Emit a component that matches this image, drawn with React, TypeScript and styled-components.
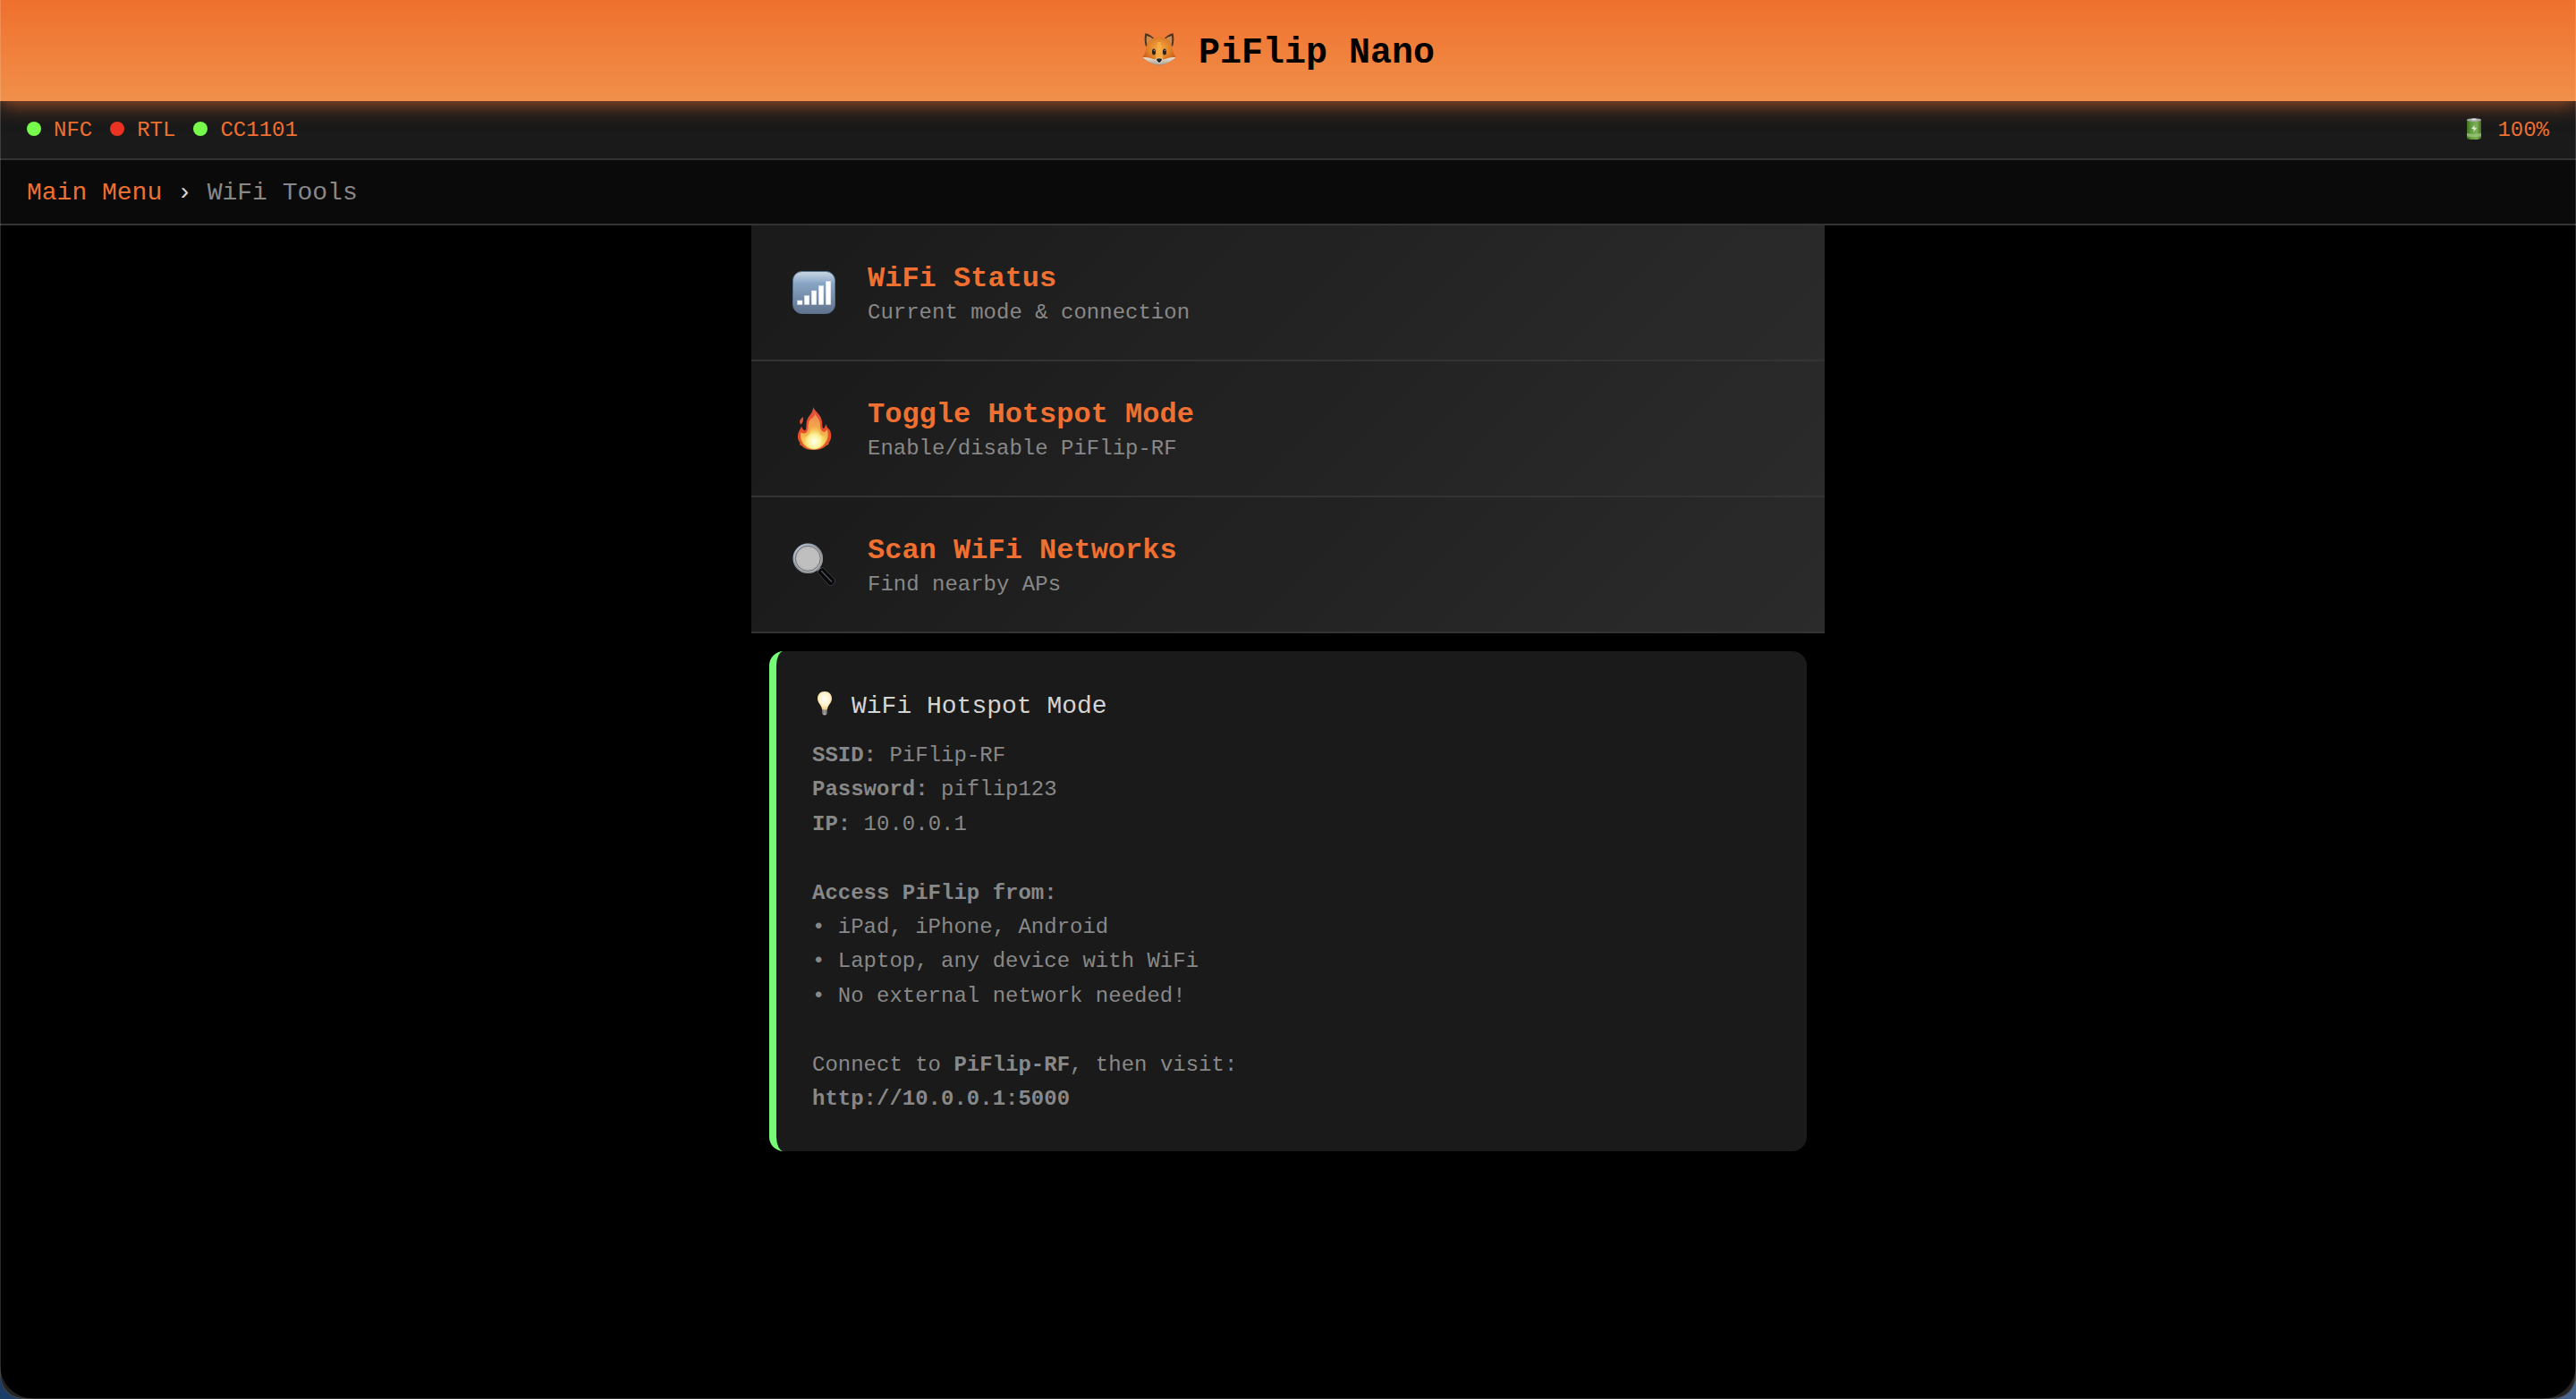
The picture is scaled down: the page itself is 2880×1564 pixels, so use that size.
import React from "react";
import styled, { createGlobalStyle } from "styled-components";

const orange = "#ef7030";
const line = "#333333";
const muted = "#888888";

const GlobalStyle = createGlobalStyle`
  * { box-sizing: border-box; }
  html { background: linear-gradient(90deg, #1b3d68, #47658f); }
  body {
    margin: 0;
    font-family: "Courier New", "Liberation Mono", monospace;
    font-size: 24px;
    line-height: 28px;
    color: #d4d4d4;
  }
`;

const Shell = styled.div`
  min-height: 100vh;
  background: #232323;
  border-radius: 0 0 26px 26px;
  overflow: hidden;

  &::after {
    content: "";
    position: fixed;
    inset: 0;
    border: 1px solid rgba(255, 255, 255, 0.16);
    border-top: 0;
    border-radius: 0 0 26px 26px;
    pointer-events: none;
    z-index: 2;
  }
`;

const Screen = styled.div`
  min-height: 100vh;
  background: #000;
  border-radius: 0 0 38px 38px;
  overflow: hidden;
`;

const Header = styled.header`
  position: relative;
  z-index: 1;
  display: flex;
  justify-content: center;
  align-items: center;
  gap: 24px;
  padding: 37px 30px 30px;
  background: linear-gradient(180deg, #ef702d, #f0904a);
  box-shadow: 0 4px 20px rgba(239, 112, 48, 0.62);
`;

const AppTitle = styled.h1`
  margin: 0;
  font-size: 40px;
  line-height: 46px;
  font-weight: bold;
  color: #000;
`;

const StatusBar = styled.div`
  display: flex;
  justify-content: space-between;
  align-items: center;
  padding: 19px 30px 17px;
  background: #1a1a1a;
  border-bottom: 2px solid ${line};
  color: ${orange};
`;

const StatusGroup = styled.div`
  display: flex;
  gap: 20px;
`;

const StatusItem = styled.span`
  display: flex;
  align-items: center;
  gap: 14px;

  & > svg {
    margin-bottom: 4px;
  }
`;

const Dot = styled.span<{ $on: boolean }>`
  width: 16px;
  height: 16px;
  margin-bottom: 4px;
  border-radius: 50%;
  background: ${(p) => (p.$on ? "#76fb4c" : "#ea3323")};
`;

const Breadcrumb = styled.nav`
  padding: 21px 30px 18px;
  background: #0a0a0a;
  border-bottom: 2px solid ${line};
  font-size: 28px;
  line-height: 32px;
`;

const CrumbLink = styled.a`
  color: ${orange};
  text-decoration: none;
`;

const CrumbCurrent = styled.span`
  color: ${muted};
`;

const Content = styled.main`
  width: 100%;
  max-width: 1200px;
  margin: 0 auto;
`;

const MenuItem = styled.button`
  display: flex;
  align-items: center;
  gap: 30px;
  width: 100%;
  padding: 37px 40px 38px;
  border: 0;
  border-bottom: 2px solid ${line};
  background: linear-gradient(135deg, #1a1a1a, #2b2b2b);
  font: inherit;
  text-align: left;
  cursor: pointer;
`;

const MenuIcon = styled.span`
  display: flex;
  justify-content: center;
  width: 60px;
`;

const MenuText = styled.span`
  display: flex;
  flex-direction: column;
  gap: 6px;
  padding-top: 5px;
`;

const MenuTitle = styled.span`
  font-size: 32px;
  line-height: 36px;
  font-weight: bold;
  color: ${orange};
`;

const MenuNote = styled.span`
  color: ${muted};
`;

const Card = styled.section`
  margin: 20px;
  padding: 42px 40px 39px;
  background: #1a1a1a;
  border-left: 8px solid #75fb77;
  border-radius: 16px;
`;

const CardTitle = styled.h2`
  display: flex;
  align-items: center;
  gap: 16px;
  margin: 0 0 16px;
  font-size: 28px;
  line-height: 40px;
  font-weight: normal;

  & > svg {
    margin-bottom: 6px;
  }
`;

const CardText = styled.p`
  margin: 0;
  line-height: 1.6;
  color: ${muted};
`;

const Fox = () => (
  <svg width="40" height="46" viewBox="0 2 40 46" aria-hidden="true">
    <defs>
      <radialGradient id="foxFace" cx="0.5" cy="0.4" r="0.6">
        <stop offset="0" stopColor="#f6ac45" />
        <stop offset="0.6" stopColor="#e07f28" />
        <stop offset="1" stopColor="#bd5618" />
      </radialGradient>
      <linearGradient id="foxMuzzle" x1="0" y1="0" x2="0" y2="1">
        <stop offset="0" stopColor="#efe4d2" />
        <stop offset="1" stopColor="#a99f90" />
      </linearGradient>
    </defs>
    <path d="M4.5 2 C3.2 7 3.4 12 5 17 L15 9 C12 5.5 8.5 3 4.5 2Z" fill="#4d3322" />
    <path d="M35.5 2 C36.8 7 36.6 12 35 17 L25 9 C28 5.5 31.5 3 35.5 2Z" fill="#4d3322" />
    <path d="M6 5 C5.3 9 5.6 13 7 17 L14 9.5 C11.5 7 9 5.8 6 5Z" fill="#cf8a4e" />
    <path d="M34 5 C34.7 9 34.4 13 33 17 L26 9.5 C28.5 7 31 5.8 34 5Z" fill="#cf8a4e" />
    <path d="M20 6.5 C12 6.5 6.5 12 5.5 19 C5 23 3.5 26 1.5 29 C6 33.5 13 37.5 20 37.7 C27 37.5 34 33.5 38.5 29 C36.5 26 35 23 34.5 19 C33.5 12 28 6.5 20 6.5Z" fill="url(#foxFace)" />
    <path d="M1.5 29 C6 28.5 11 30 15.5 31.5 C17 29.5 18.5 28.8 20 28.8 C21.5 28.8 23 29.5 24.5 31.5 C29 30 34 28.5 38.5 29 C34 33.5 27 37.5 20 37.7 C13 37.5 6 33.5 1.5 29Z" fill="url(#foxMuzzle)" />
    <path d="M18 12 C17.8 20 17 25 15.5 29.5 C17 32 23 32 24.5 29.5 C23 25 22.2 20 22 12Z" fill="#f7b14a" opacity="0.75" />
    <path d="M17 31 C18 30 22 30 23 31 L23 34.5 L20 36 L17 34.5Z" fill="#e5dccd" />
    <ellipse cx="14" cy="23" rx="2" ry="3.5" fill="#28241f" />
    <ellipse cx="26" cy="23" rx="2" ry="3.5" fill="#28241f" />
    <circle cx="14.5" cy="21.5" r="0.7" fill="#9a9a94" />
    <circle cx="26.5" cy="21.5" r="0.7" fill="#9a9a94" />
    <path d="M17 31 Q20 29.5 23 31 Q22.5 34.5 20 35 Q17.5 34.5 17 31Z" fill="#262423" />
  </svg>
);

const Battery = () => (
  <svg width="24" height="24" viewBox="0 0 24 24" aria-hidden="true">
    <defs>
      <linearGradient id="cell" x1="0" y1="0" x2="1" y2="0">
        <stop offset="0" stopColor="#3f6d24" />
        <stop offset="0.25" stopColor="#5f9a3b" />
        <stop offset="0.7" stopColor="#7cb256" />
        <stop offset="1" stopColor="#42701f" />
      </linearGradient>
    </defs>
    <path d="M4 2 V22 Q4 24 12 24 Q20 24 20 22 V2Z" fill="url(#cell)" />
    <ellipse cx="12" cy="2" rx="8" ry="1.8" fill="#a9adb0" />
    <ellipse cx="12" cy="1.4" rx="3" ry="1" fill="#dfe2ee" />
    <path d="M4 17 Q12 18.5 20 17 V20.5 Q12 22 4 20.5Z" fill="#9dc77c" opacity="0.75" />
    <path d="M12.8 7.5 L9 12 L12 12.5 L11 16 L15.2 11 L12.3 10.5Z" fill="#dcebd0" />
  </svg>
);

const Signal = () => (
  <svg width="48" height="48" viewBox="0 0 48 48" aria-hidden="true">
    <defs>
      <linearGradient id="tile" x1="0" y1="0" x2="0" y2="1">
        <stop offset="0" stopColor="#c9d6e3" />
        <stop offset="0.1" stopColor="#b4c7da" />
        <stop offset="0.28" stopColor="#89a5c5" />
        <stop offset="0.65" stopColor="#7389a6" />
        <stop offset="1" stopColor="#61738d" />
      </linearGradient>
    </defs>
    <rect x="0.5" y="0.5" width="47" height="47" rx="10" fill="url(#tile)" stroke="#58718f" />
    <g fill="#fff" stroke="#d5dde8" strokeWidth="0.5">
      <rect x="5.5" y="33" width="5.5" height="4.5" />
      <rect x="13.3" y="27.5" width="5.5" height="10" />
      <rect x="21.3" y="22" width="5.5" height="15.5" />
      <rect x="29.3" y="16.5" width="5.5" height="21" />
      <rect x="37.3" y="11.5" width="5.5" height="26" />
    </g>
  </svg>
);

const Fire = () => (
  <svg width="48" height="48" viewBox="0 0 48 48" aria-hidden="true">
    <defs>
      <linearGradient id="flame" x1="0" y1="0" x2="0" y2="1">
        <stop offset="0" stopColor="#e2533f" />
        <stop offset="0.5" stopColor="#ea4b2c" />
        <stop offset="1" stopColor="#dd5a22" />
      </linearGradient>
      <linearGradient id="flameMid" x1="0" y1="0" x2="0" y2="1">
        <stop offset="0" stopColor="#ee8a4e" />
        <stop offset="0.5" stopColor="#f4ad4c" />
        <stop offset="1" stopColor="#f5c94a" />
      </linearGradient>
      <radialGradient id="flameCore" cx="0.5" cy="0.7" r="0.55">
        <stop offset="0" stopColor="#fffff0" />
        <stop offset="0.45" stopColor="#fdf29a" />
        <stop offset="1" stopColor="#f8d75a" stopOpacity="0" />
      </radialGradient>
    </defs>
    <path d="M23 0 C24 4 32 8 33 16 C33.5 19 33 21 34 24 C36 24.5 36.5 21 37.5 19 C38 22 40 24 42 26 C44 31 43.5 37 40.5 40 C41 41 39.5 43 38 43 C34 47 29 48 24 48 C18 48 13 47 10 43 C8.5 43 7.5 41 8.5 40 C5 36 5 30 9 24 L10 21.5 C11 24 12 26 14 26.5 C16.5 24 14.5 19 16.5 14 C18.5 9 23.5 6 23 0Z" fill="url(#flame)" />
    <path d="M12 11 C11.5 14 13 16 9.5 19.5 C7.5 18 7 14.5 12 11Z" fill="#e2523a" />
    <path d="M25 7 C27 11 31 14 31 20 C31 24 32 27 35 28 C37 28 38 26 38.5 25 C42 34 38 44 25 46 C13 46 8 38 9 29 C10 28 12 29.5 14 29.5 C19 27 16.5 21 18.5 16 C20.5 12 25 12 25 7Z" fill="url(#flameMid)" />
    <path d="M25 17 C30 24 29 29 33 32 C36 33 37 31 38 31 C40 40 33 47 24 47.5 C15 47 9 41 11 33 C13 34 15 34 17 32 C21 28 20 22 25 17Z" fill="url(#flameCore)" />
  </svg>
);

const Magnifier = () => (
  <svg width="48" height="48" viewBox="0 0 48 48" aria-hidden="true">
    <defs>
      <linearGradient id="rim" x1="0" y1="0" x2="1" y2="1">
        <stop offset="0" stopColor="#b5cdea" />
        <stop offset="0.5" stopColor="#858a92" />
        <stop offset="1" stopColor="#a1a1a1" />
      </linearGradient>
    </defs>
    <path d="M26 29 L29.5 26 L34 30 L30 34Z" fill="#777b82" />
    <path d="M28.5 33.5 C27.5 31.5 32 27 34.5 27.8 L47 40.5 C49 43.5 44 49 41 47.5Z" fill="#07080a" stroke="#464a52" strokeWidth="0.8" />
    <path d="M32.5 31.500 L43.500 43" stroke="#4c5057" strokeWidth="1.6" strokeLinecap="round" />
    <circle cx="17.3" cy="17.3" r="16.8" fill="#3a3e45" />
    <circle cx="17.3" cy="17.3" r="15.9" fill="#c1c1c1" stroke="url(#rim)" strokeWidth="1.8" />
    <circle cx="17.3" cy="17.3" r="14" fill="#b9b9b9" stroke="#5e6166" strokeWidth="0.9" />
    <circle cx="17.3" cy="17.3" r="12" fill="#bfbfbf" />
  </svg>
);

const Bulb = () => (
  <svg width="28" height="28" viewBox="0 0 28 28" aria-hidden="true">
    <defs>
      <radialGradient id="glass" cx="0.5" cy="0.42" r="0.6">
        <stop offset="0" stopColor="#fffefa" />
        <stop offset="0.6" stopColor="#fdf2cd" />
        <stop offset="1" stopColor="#ecca70" />
      </radialGradient>
      <linearGradient id="cap" x1="0" y1="0" x2="1" y2="0">
        <stop offset="0" stopColor="#77736d" />
        <stop offset="0.5" stopColor="#c9c7c2" />
        <stop offset="1" stopColor="#66625d" />
      </linearGradient>
    </defs>
    <path d="M14 0 C9 0 6 3.5 6 8 C6 13 10.5 15 11 20 H17 C17.5 15 22 13 22 8 C22 3.5 19 0 14 0Z" fill="url(#glass)" />
    <path d="M11 20 H17 V24 Q16.5 26.5 14 26.5 Q11.5 26.5 11 24Z" fill="url(#cap)" />
    <path d="M11 22 H17 M11 24 H17" stroke="#58544f" strokeWidth="0.7" />
  </svg>
);

const radios = [
  { name: "NFC", on: true },
  { name: "RTL", on: false },
  { name: "CC1101", on: true },
];

const tools = [
  { title: "WiFi Status", note: "Current mode & connection", Icon: Signal },
  { title: "Toggle Hotspot Mode", note: "Enable/disable PiFlip-RF", Icon: Fire },
  { title: "Scan WiFi Networks", note: "Find nearby APs", Icon: Magnifier },
];

export default function App() {
  return (
    <>
      <GlobalStyle />
      <Shell>
        <Screen>
          <Header>
            <Fox />
            <AppTitle>PiFlip Nano</AppTitle>
          </Header>
          <StatusBar>
            <StatusGroup>
              {radios.map((r) => (
                <StatusItem key={r.name}>
                  <Dot $on={r.on} />
                  {r.name}
                </StatusItem>
              ))}
            </StatusGroup>
            <StatusItem>
              <Battery />
              100%
            </StatusItem>
          </StatusBar>
          <Breadcrumb>
            <CrumbLink href="#">Main Menu</CrumbLink> › <CrumbCurrent>WiFi Tools</CrumbCurrent>
          </Breadcrumb>
          <Content>
            {tools.map(({ title, note, Icon }) => (
              <MenuItem key={title} type="button">
                <MenuIcon>
                  <Icon />
                </MenuIcon>
                <MenuText>
                  <MenuTitle>{title}</MenuTitle>
                  <MenuNote>{note}</MenuNote>
                </MenuText>
              </MenuItem>
            ))}
            <Card>
              <CardTitle>
                <Bulb />
                WiFi Hotspot Mode
              </CardTitle>
              <CardText>
                <strong>SSID:</strong> PiFlip-RF
                <br />
                <strong>Password:</strong> piflip123
                <br />
                <strong>IP:</strong> 10.0.0.1
                <br />
                <br />
                <strong>Access PiFlip from:</strong>
                <br />
                • iPad, iPhone, Android
                <br />
                • Laptop, any device with WiFi
                <br />
                • No external network needed!
                <br />
                <br />
                Connect to <strong>PiFlip-RF</strong>, then visit:
                <br />
                <strong>http://10.0.0.1:5000</strong>
              </CardText>
            </Card>
          </Content>
        </Screen>
      </Shell>
    </>
  );
}
